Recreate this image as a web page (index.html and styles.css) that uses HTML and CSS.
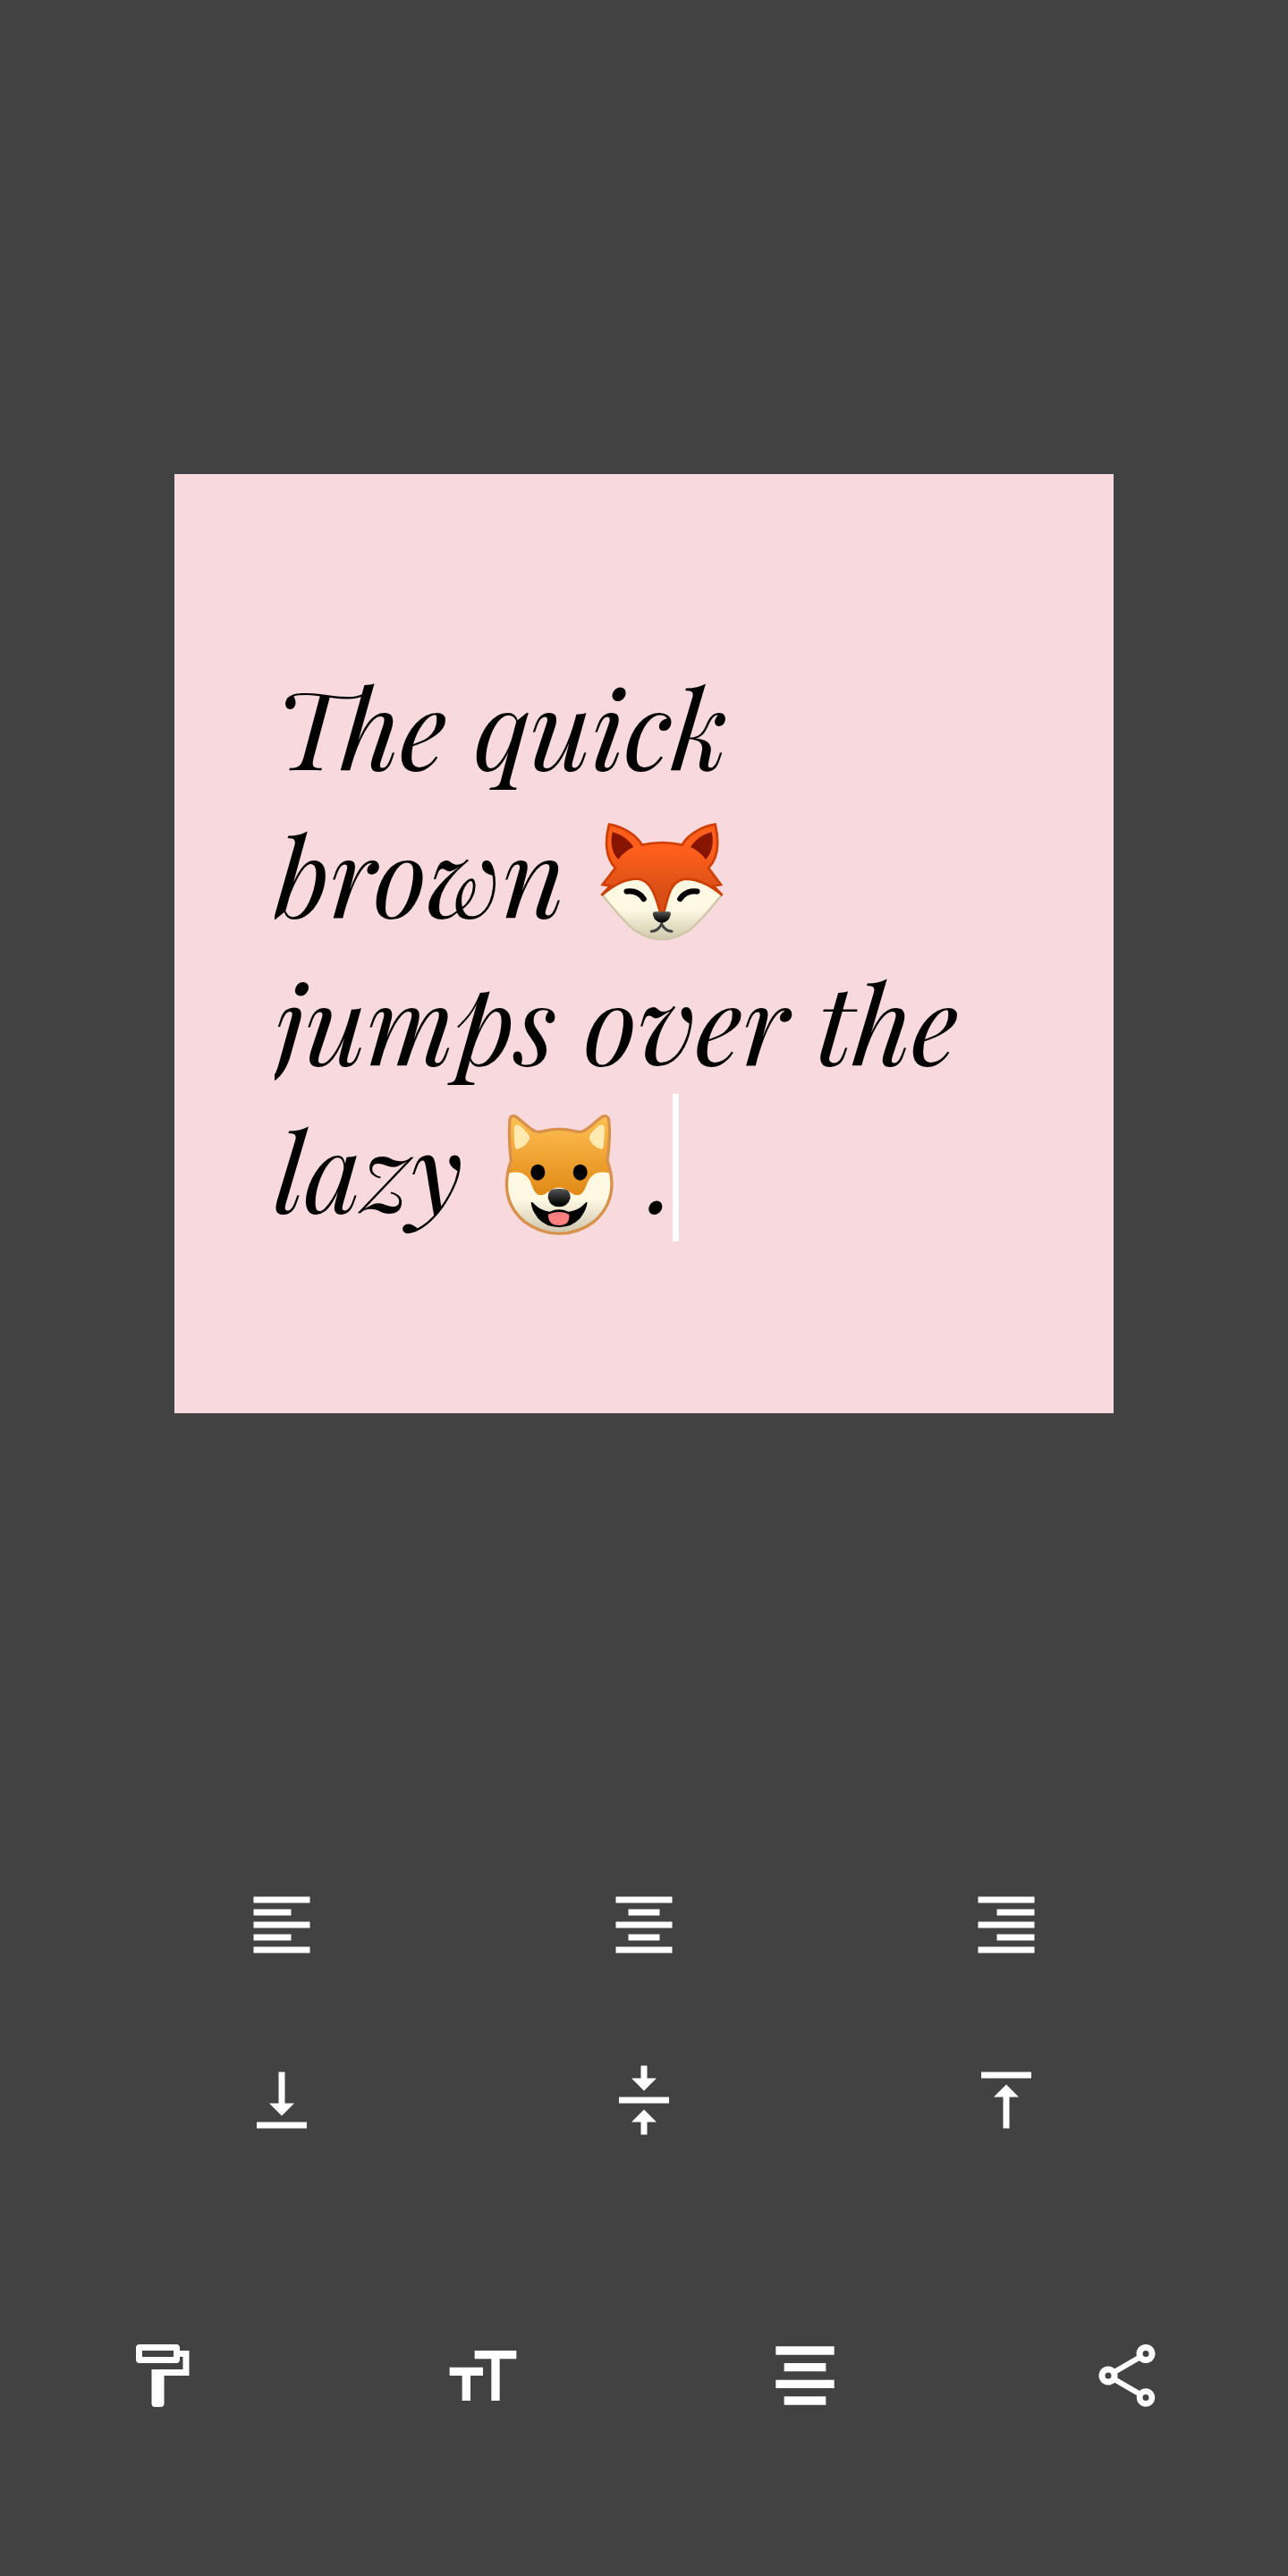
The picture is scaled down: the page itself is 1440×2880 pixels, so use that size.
FILE: index.html
```html
<!DOCTYPE html>
<html lang="en">
<head>
<meta charset="utf-8">
<meta name="viewport" content="width=device-width, initial-scale=1">
<title>Text card editor</title>
<link rel="stylesheet" href="styles.css">
</head>
<body>
<main class="stage">
  <div class="card">
    <div class="editor" role="textbox" aria-multiline="true" aria-label="Card text" contenteditable="true" spellcheck="false">
      <div class="line">The quick</div>
      <div class="line">brown <svg class="emoji" viewBox="64 38 414 432" role="img" aria-label="fox">
        <defs>
          <linearGradient id="foxFur" x1="0" y1="0" x2="0" y2="1"><stop offset=".3" stop-color="#ff5f1a"/><stop offset=".8" stop-color="#d84e17"/></linearGradient>
          <linearGradient id="foxFace" x1="0" y1="0" x2="0" y2="1"><stop offset=".5" stop-color="#fff8e3"/><stop offset="1" stop-color="#cfc9ae"/></linearGradient>
          <linearGradient id="nose" x1="0" y1="0" x2="0" y2="1"><stop offset="0" stop-color="#555"/><stop offset=".9" stop-color="#000"/></linearGradient>
        </defs>
        <path d="M72 304C120 262 158 248 192 250L350 250C390 247 430 270 471 304C440 341 408 385 362 423C330 443 300 453 272 453C243 453 209 442 180 423C135 386 104 342 72 304Z" fill="url(#foxFace)" stroke="#cfc6a8" stroke-width="7"/>
        <path d="M94 66C132 72 184 98 203 134Q271 120 339 134C358 98 412 71 450 66C462 119 463 177 427 213L469 269L444 272L474 305C430 267 382 247 347 251C297 258 291 316 280 359H262C251 316 238 255 191 250C157 248 112 267 68 305L98 272L72 269L116 213C79 178 80 119 94 66Z" fill="url(#foxFur)"/>
        <path d="M68 305L98 273L72 269L115 213C80 178 80 118 94 67C132 73 184 98 204 136Q271 120 339 136C358 98 412 72 450 67C462 119 463 177 427 213L469 269L444 273L474 305C430 267 382 247 347 251C297 258 291 316 278 360H265C251 316 238 255 191 250C157 248 112 267 68 305Z" fill="none" stroke="#cf3f00" stroke-width="8"/>
        <path d="M105 93C136 101 160 119 176 143Q147 155 125 184C101 162 98 124 105 93ZM438 93C407 101 383 119 367 143Q396 155 418 184C442 162 445 124 438 93Z" fill="#871500"/>
        <path d="M153 292Q190 287 210 317M389 292Q353 287 332 317" fill="none" stroke="#000" stroke-width="19" stroke-linecap="round"/>
        <path d="M270 395V402Q257 426 236 426M270 402Q284 426 304 426" fill="none" stroke="#424242" stroke-width="9" stroke-linecap="round"/>
        <path d="M247 360H295Q303 362 300 372Q293 397 271 397Q248 397 241 372Q239 362 247 360Z" fill="url(#nose)"/>
      </svg></div>
      <div class="line">jumps over the</div>
      <div class="line">lazy <svg class="emoji" viewBox="49 69 414 432" role="img" aria-label="dog">
        <defs>
          <linearGradient id="dogFur" x1="0" y1="0" x2="0" y2="1"><stop offset="0" stop-color="#ffc154"/><stop offset=".65" stop-color="#e28b17"/></linearGradient>
          <linearGradient id="dogFace" x1="0" y1="0" x2="0" y2="1"><stop offset=".4" stop-color="#fff8e3"/><stop offset="1" stop-color="#c3bda4"/></linearGradient>
          <clipPath id="dogHead"><path d="M95 236C89 187 88 137 91 98Q94 82 108 87C133 101 157 132 179 138C196 144 207 130 256 130S316 144 333 138C355 132 379 101 404 87Q418 82 423 98C427 137 425 187 418 236C448 320 430 389 375 439C303 494 211 494 138 439C81 389 66 320 95 236Z"/></clipPath>
        </defs>
        <path d="M95 236C89 187 88 137 91 98Q94 82 108 87C133 101 157 132 179 138C196 144 207 130 256 130S316 144 333 138C355 132 379 101 404 87Q418 82 423 98C427 137 425 187 418 236C448 320 430 389 375 439C303 494 211 494 138 439C81 389 66 320 95 236Z" fill="url(#dogFur)"/>
        <g clip-path="url(#dogHead)"><path d="M70 284C108 268 143 270 160 306C169 330 176 353 196 352C219 348 229 326 256 326S294 348 316 352C337 353 343 330 353 306C370 270 405 268 443 284V500H70Z" fill="url(#dogFace)"/></g>
        <path d="M95 236C89 187 88 137 91 98Q94 82 108 87C133 101 157 132 179 138C196 144 207 130 256 130S316 144 333 138C355 132 379 101 404 87Q418 82 423 98C427 137 425 187 418 236C448 320 430 389 375 439C303 494 211 494 138 439C81 389 66 320 95 236Z" fill="none" stroke="#d8914b" stroke-width="10"/>
        <path d="M110 117Q119 112 133 126C150 142 159 153 157 161C151 181 130 193 115 197Q109 197 107 182Q104 148 106 123ZM404 117Q395 112 381 126C364 142 356 153 358 161C363 181 382 193 399 197Q404 197 406 182Q409 148 408 123Z" fill="#ffebb2"/>
        <ellipse cx="185" cy="275" rx="24" ry="27"/><ellipse cx="327" cy="275" rx="24" ry="27"/>
        <path d="M162 376Q166 372 175 383Q195 403 225 407Q241 400 256 400T288 407Q319 403 339 383Q348 372 351 376Q348 403 326 430Q300 459 256 459T186 430Q163 401 162 376Z"/>
        <path d="M220 417Q235 408 256 408T290 417Q293 453 256 453T220 417Z" fill="#ff8080"/>
        <path d="M232 333Q257 327 281 333Q295 341 294 361Q286 391 256 391T219 361Q218 341 232 333Z" fill="url(#nose)"/>
      </svg> .<span class="caret"></span></div>
    </div>
  </div>
</main>
<div class="controls">
  <div class="align-grid" role="group" aria-label="Text alignment">
    <button type="button" class="tool" aria-label="Align left"><svg class="icon" viewBox="0 0 24 24"><path d="M3 3h18v2H3zM3 7h12v2H3zM3 11h18v2H3zM3 15h12v2H3zM3 19h18v2H3z"/></svg></button>
    <button type="button" class="tool" aria-label="Align center"><svg class="icon" viewBox="0 0 24 24"><path d="M3 3h18v2H3zM7 7h10v2H7zM3 11h18v2H3zM7 15h10v2H7zM3 19h18v2H3z"/></svg></button>
    <button type="button" class="tool" aria-label="Align right"><svg class="icon" viewBox="0 0 24 24"><path d="M3 3h18v2H3zM9 7h12v2H9zM3 11h18v2H3zM9 15h12v2H9zM3 19h18v2H3z"/></svg></button>
    <button type="button" class="tool" aria-label="Align bottom"><svg class="icon" viewBox="0 0 24 24"><path d="M16 13h-3V3h-2v10H8l4 4 4-4zM4 19v2h16v-2H4z"/></svg></button>
    <button type="button" class="tool" aria-label="Align middle"><svg class="icon" viewBox="0 0 24 24"><path d="M8 19h3v4h2v-4h3l-4-4-4 4zm8-14h-3V1h-2v4H8l4 4 4-4zM4 11v2h16v-2H4z"/></svg></button>
    <button type="button" class="tool" aria-label="Align top"><svg class="icon" viewBox="0 0 24 24"><path d="M8 11h3v10h2V11h3l-4-4-4 4zM4 3v2h16V3H4z"/></svg></button>
  </div>
  <nav class="toolbar" aria-label="Editing tools">
    <button type="button" class="tool" aria-label="Background"><svg class="icon" viewBox="0 0 24 24"><path fill-rule="evenodd" d="M18 4V3c0-.55-.45-1-1-1H5c-.55 0-1 .45-1 1v4c0 .55.45 1 1 1h12c.55 0 1-.45 1-1V6h1v4H9v11c0 .55.45 1 1 1h2c.55 0 1-.45 1-1v-9h8V4zM6 4h10v2H6z"/></svg></button>
    <button type="button" class="tool" aria-label="Text size"><svg class="icon" viewBox="0 0 18 18"><path d="M7 3h10v2h-4v10h-2V5H7zM1 7h8v2H6v6H4V9H1z"/></svg></button>
    <button type="button" class="tool" aria-label="Alignment"><svg class="icon" viewBox="0 0 18 18"><path d="M2 2h14v2H2zM4 6h10v2H4zM2 10h14v2H2zM4 14h10v2H4z"/></svg></button>
    <button type="button" class="tool" aria-label="Share"><svg class="icon" viewBox="0 0 24 24"><path fill-rule="evenodd" d="M18 16.08c-.76 0-1.44.3-1.96.77L8.91 12.7c.05-.23.09-.46.09-.7s-.04-.47-.09-.7l7.05-4.11c.54.5 1.25.81 2.04.81 1.66 0 3-1.34 3-3s-1.34-3-3-3-3 1.34-3 3c0 .24.04.47.09.7L8.04 9.81C7.5 9.31 6.79 9 6 9c-1.66 0-3 1.34-3 3s1.34 3 3 3c.79 0 1.5-.31 2.04-.81l7.12 4.16c-.05.21-.08.43-.08.65 0 1.61 1.31 2.92 2.92 2.92s2.92-1.31 2.92-2.92-1.31-2.92-2.92-2.92zM18 4a1 1 0 1 1 0 2 1 1 0 0 1 0-2zM6 11a1 1 0 1 1 0 2 1 1 0 0 1 0-2zM18 18a1 1 0 1 1 0 2 1 1 0 0 1 0-2z"/></svg></button>
  </nav>
</div>
</body>
</html>
```
FILE: styles.css
```css
* { box-sizing: border-box; }

body {
  margin: 0;
  min-height: 100vh;
  display: flex;
  flex-direction: column;
  background: #424242;
  font-family: "Playfair Display", "Liberation Serif", serif;
}

.stage {
  flex: 1;
  display: flex;
  align-items: center;
  padding: 0 195px;
}

.card {
  flex: 1;
  aspect-ratio: 1;
  padding: 198px 112px 0;
  background: #f8dade;
}

.editor {
  overflow: clip;
  outline: none;
  color: #000;
  font-size: 122px;
  font-style: italic;
  line-height: 165px;
}

.line {
  position: relative;
  white-space: nowrap;
}

.emoji {
  width: 138px;
  height: 144px;
  margin-left: 8px;
  vertical-align: -30px;
}

.caret {
  position: absolute;
  bottom: 0;
  width: 7px;
  height: 165px;
  margin-left: -3px;
  background: #fff;
}

.controls {
  display: flex;
  flex-direction: column;
  gap: 224px;
  padding-bottom: 182px;
}

.align-grid {
  display: grid;
  grid-template-columns: repeat(3, 1fr);
  row-gap: 112px;
  padding: 0 112px;
}

.toolbar {
  display: grid;
  grid-template-columns: repeat(4, 1fr);
}

.tool {
  justify-self: center;
  display: block;
  padding: 0;
  border: 0;
  background: none;
  color: #fff;
  cursor: pointer;
}

.icon {
  display: block;
  width: 84px;
  height: 84px;
  fill: currentColor;
}
```
